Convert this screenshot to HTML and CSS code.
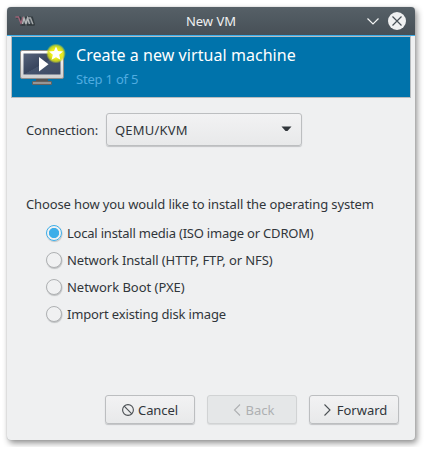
FILE: index.html
```html
<!DOCTYPE html>
<html lang="en">
<head>
<meta charset="utf-8">
<title>New VM</title>
<link rel="stylesheet" href="styles.css">
</head>
<body>
<main class="window">
  <header class="titlebar">
    <svg class="app-icon" width="20" height="10" viewBox="0 0 20 10" fill="none">
      <path d="M1 1.500h4l2 6 2-6h8l2 7H7" stroke="#343c41" stroke-width="2"/>
      <path d="M.5 1h3l2.500 6.500L8 1" stroke="#a0667a" stroke-width="1.300"/>
      <path d="M7.500 8l1.500-6 2 6 1.500-6 2 6" stroke="#b4b7b8" stroke-width="1.400"/>
      <path d="M12.500 2h3l2.500 6.500" stroke="#a4a8aa" stroke-width="1.400"/>
      <path d="M5 9h14" stroke="#30383d"/>
    </svg>
    <span class="title">New VM</span>
    <div class="controls">
      <svg width="12" height="18" viewBox="0 0 12 18" fill="none" stroke="#f4f5f5" stroke-width="1.2"><path d="M.5 6.500 6 12l5.500-5.500"/></svg>
      <svg width="18" height="18" viewBox="0 0 18 18"><circle cx="9" cy="9" r="9" fill="#eff0f1"/><path d="M4.500 4.500l9 9m0-9-9 9" stroke="#475057" stroke-width="1.200"/></svg>
    </div>
  </header>
  <section class="banner">
    <svg class="monitor" width="48" height="44" viewBox="0 0 48 44">
      <defs>
        <linearGradient id="frame" x1="0" y1="0" x2="0" y2="1"><stop stop-color="#fff"/><stop offset="1" stop-color="#cfcfcf"/></linearGradient>
        <linearGradient id="screen" x1="0" y1="0" x2="1" y2="1"><stop stop-color="#56627a"/><stop offset=".5" stop-color="#38455e"/><stop offset=".51" stop-color="#46546d"/><stop offset="1" stop-color="#3e4b65"/></linearGradient>
        <radialGradient id="glow"><stop offset=".5" stop-color="#eeee16"/><stop offset=".78" stop-color="#d8df18" stop-opacity=".85"/><stop offset="1" stop-color="#c8de28" stop-opacity="0"/></radialGradient>
      </defs>
      <path d="M18 34h12v4H18z" fill="#555"/>
      <rect x="14.500" y="37.500" width="19" height="3" rx=".5" fill="#969696" stroke="#65615e"/>
      <rect x="2.500" y="6.500" width="43" height="28" rx="1.500" fill="url(#frame)" stroke="#8c8c8c"/>
      <rect x="5.500" y="9.500" width="37" height="21" fill="url(#screen)"/>
      <path d="M21 13v14.500l9.500-7.250z" fill="#fff"/>
      <circle cx="38" cy="9.500" r="10" fill="url(#glow)"/>
      <path d="M38 2.500l2 4.600 5 .4-3.800 3.300 1.200 5-4.400-2.600-4.400 2.600 1.200-5L31 7.500l5-.4z" fill="#fff"/>
    </svg>
    <div class="banner-text">
      <h1>Create a new virtual machine</h1>
      <p>Step 1 of 5</p>
    </div>
  </section>
  <section class="content">
    <div class="connection">
      <span class="label">Connection:</span>
      <div class="combo"><span class="combo-text">QEMU/KVM</span>
        <svg width="11" height="6" viewBox="0 0 11 6"><path d="M.5.5h10L6.500 5h-2z" fill="#31363b"/></svg>
      </div>
    </div>
    <p class="prompt">Choose how you would like to install the operating system</p>
    <div class="options">
      <label class="option local"><i class="radio checked"></i><span>Local install media (ISO image or CDROM)</span></label>
      <label class="option network"><i class="radio"></i><span>Network Install (HTTP, FTP, or NFS)</span></label>
      <label class="option boot"><i class="radio"></i><span>Network Boot (PXE)</span></label>
      <label class="option"><i class="radio"></i><span>Import existing disk image</span></label>
    </div>
    <footer class="actions">
      <div class="button cancel"><svg width="12" height="12" viewBox="0 0 12 12" fill="none" stroke="#4a4f53" stroke-width="1.100"><circle cx="6" cy="6" r="5.400"/><path d="M2.200 2.200l7.600 7.600"/></svg><span>Cancel</span></div>
      <div class="button disabled"><svg width="12" height="12" viewBox="0 0 12 12" fill="none" stroke="#aeb0b2" stroke-width="1.100"><path d="M10 .5 4.500 6l5.500 5.500"/></svg><span>Back</span></div>
      <div class="button"><svg width="12" height="12" viewBox="0 0 12 12" fill="none" stroke="#4a4f53" stroke-width="1.100"><path d="M3.500.5 9 6l-5.500 5.500"/></svg><span>Forward</span></div>
    </footer>
  </section>
</main>
</body>
</html>
```
FILE: styles.css
```css
* { box-sizing: border-box; }
body {
  margin: 0;
  padding: 7px;
  background: #fff;
  color: #31363b;
  font: 13px/18px "Noto Sans", sans-serif;
  overflow: hidden;
}
h1, p { margin: 0; font-weight: 400; }
svg { display: block; flex: none; }
.window {
  width: 408px;
  height: 433px;
  background: #eff0f1;
  border-radius: 4px;
  box-shadow: 0 0 1px #a0a2a4, 2px 3px 6px rgba(0, 0, 0, .45);
}
.titlebar {
  display: grid;
  grid-template-columns: 60px 1fr 60px;
  align-items: center;
  height: 29px;
  background: linear-gradient(#566067, #475057);
  border-bottom: 1px solid #3daee9;
  border-radius: 4px 4px 0 0;
  color: #eff0f1;
}
.app-icon { margin-left: 8px; }
.title { text-align: center; }
.controls { display: flex; gap: 9px; justify-content: flex-end; padding-right: 9px; }
.banner {
  display: flex;
  height: 62px;
  margin: 0 4px;
  padding: 7px;
  background: #0073ab;
  border: 1px solid #b8bcbf;
}
.monitor { margin-left: -1px; }
.banner-text { padding-left: 10px; }
.banner h1 { color: #fff; font-size: 16px; line-height: 22px; letter-spacing: .06px; white-space: nowrap; }
.banner p { color: #50ace0; margin-top: 4px; letter-spacing: -.2px; }
.content { padding: 14px 16px 0 19px; }
.connection { display: flex; align-items: center; height: 34px; }
.label { width: 80px; padding-top: 2px; letter-spacing: -.1px; }
.combo {
  display: flex;
  align-items: center;
  justify-content: space-between;
  width: 196px;
  height: 33px;
  padding: 0 9px 0 8px;
}
.combo-text { padding-top: 2px; letter-spacing: .2px; }
.combo, .button {
  background: linear-gradient(#f2f2f3, #e8e9ea);
  border: 1px solid #bcbec0;
  border-radius: 3px;
  box-shadow: 0 1px 1px #c1c3c5;
}
.prompt { margin-top: 49px; white-space: nowrap; letter-spacing: -.12px; }
.options { margin: 6px 0 0 20px; }
.option { display: flex; align-items: center; gap: 5px; height: 27px; white-space: nowrap; letter-spacing: -.15px; }
.local { letter-spacing: -.21px; }
.network { letter-spacing: -.1px; }
.boot { letter-spacing: -.03px; }
.radio {
  display: block;
  flex: none;
  width: 16px;
  height: 16px;
  border: 1px solid #afb1b3;
  border-radius: 50%;
  box-shadow: .5px 1px 1px #bec0c2;
  background: #f0f1f2;
}
.checked { border-color: #3daee9; background: radial-gradient(circle, #3daee9 4.700px, #f0f1f2 5.500px); }
.actions { display: flex; justify-content: flex-end; gap: 12px; margin-top: 68px; }
.button { display: flex; align-items: center; justify-content: center; gap: 4px; width: 90px; height: 29px; }
.cancel { letter-spacing: -.1px; }
.disabled { color: #aeb0b2; border-color: #d1d3d4; background: #e5e7e8; box-shadow: 0 1px 1px #d9dbdc; }
```
